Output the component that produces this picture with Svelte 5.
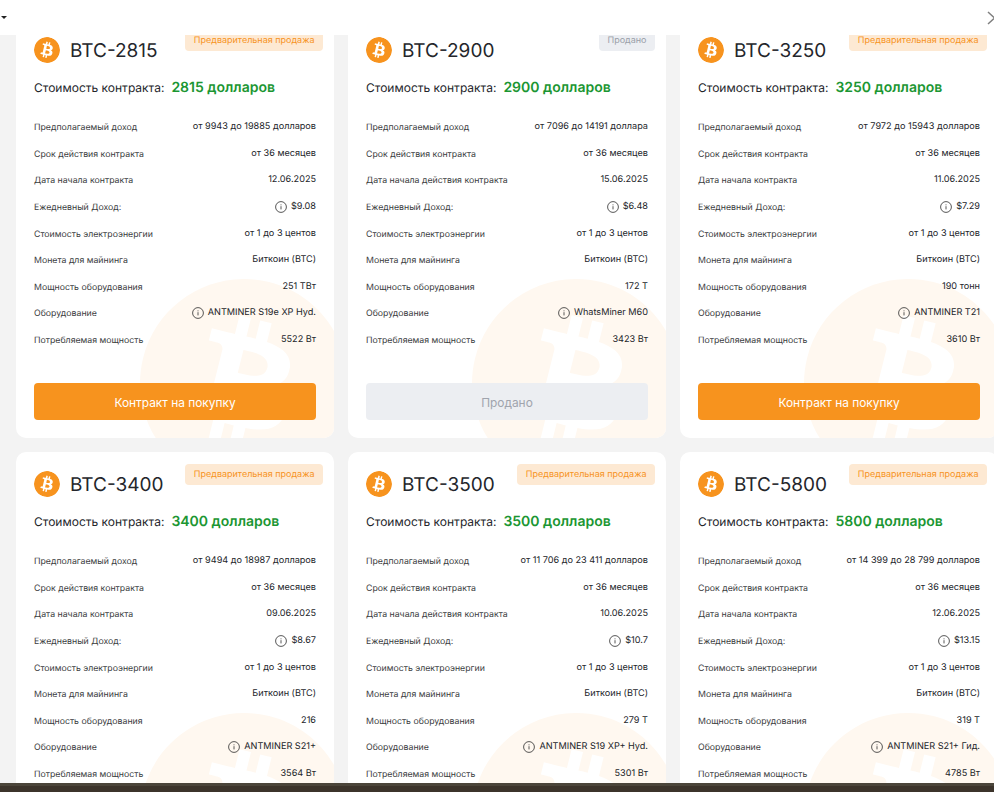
<script>
  const btc = "M23.638 14.904c-1.602 6.43-8.113 10.34-14.542 8.736C2.67 22.05-1.244 15.525.362 9.105 1.962 2.67 8.475-1.243 14.9.358c6.43 1.605 10.342 8.115 8.738 14.548v-.002zm-6.35-4.613c.24-1.59-.974-2.45-2.64-3.03l.54-2.153-1.315-.33-.525 2.107c-.345-.087-.705-.167-1.064-.25l.526-2.127-1.32-.33-.54 2.165c-.285-.067-.565-.132-.84-.2l-1.815-.45-.35 1.407s.975.225.955.236c.535.136.63.486.615.766l-1.477 5.92c-.075.166-.24.406-.614.314.015.02-.96-.24-.96-.24l-.66 1.51 1.71.426.93.242-.54 2.19 1.32.327.54-2.17c.36.1.705.19 1.05.273l-.51 2.154 1.32.33.545-2.19c2.24.427 3.93.257 4.64-1.774.57-1.637-.03-2.58-1.217-3.196.854-.193 1.5-.76 1.68-1.93h.01zm-3.01 4.22c-.404 1.64-3.157.75-4.05.53l.72-2.9c.896.23 3.757.67 3.33 2.37zm.41-4.24c-.37 1.49-2.662.735-3.405.55l.654-2.64c.744.18 3.137.524 2.75 2.084v.006z";

  const labels = ["Предполагаемый доход", "Срок действия контракта", "Дата начала контракта", "Ежедневный Доход:", "Стоимость электроэнергии", "Монета для майнинга", "Мощность оборудования", "Оборудование", "Потребляемая мощность"];

  const cards = [
    { id: "BTC-2815", price: "2815 долларов", income: "от 9943 до 19885 долларов", date: "12.06.2025", daily: "$9.08", power: "251 ТВт", device: "ANTMINER S19e XP Hyd.", watts: "5522 Вт" },
    { id: "BTC-2900", price: "2900 долларов", income: "от 7096 до 14191 доллара", date: "15.06.2025", daily: "$6.48", power: "172 Т", device: "WhatsMiner M60", watts: "3423 Вт", sold: true, dateLabel: "Дата начала действия контракта" },
    { id: "BTC-3250", price: "3250 долларов", income: "от 7972 до 15943 долларов", date: "11.06.2025", daily: "$7.29", power: "190 тонн", device: "ANTMINER T21", watts: "3610 Вт" },
    { id: "BTC-3400", price: "3400 долларов", income: "от 9494 до 18987 долларов", date: "09.06.2025", daily: "$8.67", power: "216", device: "ANTMINER S21+", watts: "3564 Вт" },
    { id: "BTC-3500", price: "3500 долларов", income: "от 11 706 до 23 411 долларов", date: "10.06.2025", daily: "$10.7", power: "279 Т", device: "ANTMINER S19 XP+ Hyd.", watts: "5301 Вт", dateLabel: "Дата начала действия контракта" },
    { id: "BTC-5800", price: "5800 долларов", income: "от 14 399 до 28 799 долларов", date: "12.06.2025", daily: "$13.15", power: "319 Т", device: "ANTMINER S21+ Гид.", watts: "4785 Вт" }
  ];

  function rows(c) {
    return [
      { l: labels[0], v: c.income },
      { l: labels[1], v: "от 36 месяцев" },
      { l: c.dateLabel ?? labels[2], v: c.date },
      { l: labels[3], v: c.daily, info: true },
      { l: labels[4], v: "от 1 до 3 центов" },
      { l: labels[5], v: "Биткоин (BTC)" },
      { l: labels[6], v: c.power },
      { l: labels[7], v: c.device, info: true },
      { l: labels[8], v: c.watts }
    ];
  }
</script>

<div class="page">
  <header class="bar">
    <span class="caret"></span>
    <svg class="close" width="7" height="14" viewBox="0 0 7 14"><path d="M1 1l6.5 6L1 13" fill="none" stroke="#808080" stroke-width="1.5"/></svg>
  </header>
  <main class="viewport">
    <div class="grid">
      {#each cards as c}
        <article class="card">
          <svg class="mark" viewBox="0 0 24 24"><path d={btc} fill="#fff8f0" fill-rule="evenodd"/></svg>
          <span class="badge" class:sold={c.sold}>{c.sold ? "Продано" : "Предварительная продажа"}</span>
          <div class="head">
            <svg class="logo" viewBox="0 0 24 24"><path d={btc} fill="#f7931e" fill-rule="evenodd"/></svg>
            <h2>{c.id}</h2>
          </div>
          <div class="price"><span>Стоимость контракта:</span><strong>{c.price}</strong></div>
          <dl>
            {#each rows(c) as r}
              <div class="row">
                <dt>{r.l}</dt>
                <dd>
                  {#if r.info}
                    <svg class="info" viewBox="0 0 12 12"><circle cx="6" cy="6" r="5.4" fill="none" stroke="#2c2c2c" stroke-width=".8"/><path d="M6 5.2v3.2M6 3.4v.9" stroke="#2c2c2c" stroke-width=".8"/></svg>
                  {/if}
                  {r.v}
                </dd>
              </div>
            {/each}
          </dl>
          <button class:sold={c.sold}>{c.sold ? "Продано" : "Контракт на покупку"}</button>
        </article>
      {/each}
    </div>
  </main>
  <footer class="dock"></footer>
</div>

<style>
  :global(body) { margin: 0; }
  .page { width: 994px; height: 792px; display: flex; flex-direction: column; overflow: hidden; background: #f3f3f3; font-family: Inter, "Noto Sans", sans-serif; color: #24262b; text-rendering: geometricPrecision; }
  .bar { height: 35px; flex: none; background: #fff; display: flex; align-items: center; justify-content: space-between; box-sizing: border-box; position: relative; z-index: 1; }
  .caret { width: 0; height: 0; border: 3px solid transparent; border-top: 3px solid #222; border-bottom: 0; margin-left: 1px; }
  .viewport { flex: 1; min-height: 0; overflow: hidden; }
  .grid { display: grid; grid-template-columns: repeat(3, 318px); gap: 14px; padding-left: 16px; margin-top: -17px; }
  .card { position: relative; height: 420px; background: #fff; border-radius: 10px; overflow: hidden; padding: 18px; box-sizing: border-box; display: flex; flex-direction: column; }
  .mark { position: absolute; width: 208px; height: 208px; left: 124px; top: 261px; }
  .badge { position: absolute; top: 12px; right: 11px; height: 21px; line-height: 22px; padding: 0 8.5px; border-radius: 4px; background: #fde9d3; color: #f7931e; font-size: 9px; }
  .badge.sold { background: #eceef2; color: #9a9ea8; }
  .head { position: relative; display: flex; align-items: center; gap: 10px; height: 28px; }
  .logo { width: 26px; height: 26px; background: radial-gradient(circle, #fff 60%, transparent 62%); border-radius: 50%; }
  h2 { margin: 0; padding-top: 1px; font-size: 19px; font-weight: 400; line-height: 28px; }
  .price { position: relative; display: flex; align-items: center; gap: 7px; margin-top: 12px; height: 22px; font-size: 12px; }
  .price strong { color: #1b9632; font-size: 14px; font-weight: 600; }
  dl { position: relative; margin: 16px 0 0; }
  .row { height: 26.6px; display: flex; justify-content: space-between; align-items: center; }
  dt { font-size: 8.75px; color: #3a3c40; padding-top: 2px; }
  dd { margin: 0; font-size: 9.15px; color: #24262b; display: flex; align-items: center; gap: 4px; padding-bottom: 1px; }
  .info { width: 12px; height: 12px; }
  button { position: absolute; left: 18px; right: 18px; top: 365px; height: 37px; padding: 1px 0 0; border: 0; border-radius: 4px; background: #f7931e; color: #fff; font: 400 11.9px Inter, "Noto Sans", sans-serif; }
  button.sold { background: #eceef2; color: #a0a4ad; }
  .dock { height: 9px; flex: none; background: #3c342b; border-top: 3px solid #4b453a; box-sizing: border-box; position: relative; }
</style>
